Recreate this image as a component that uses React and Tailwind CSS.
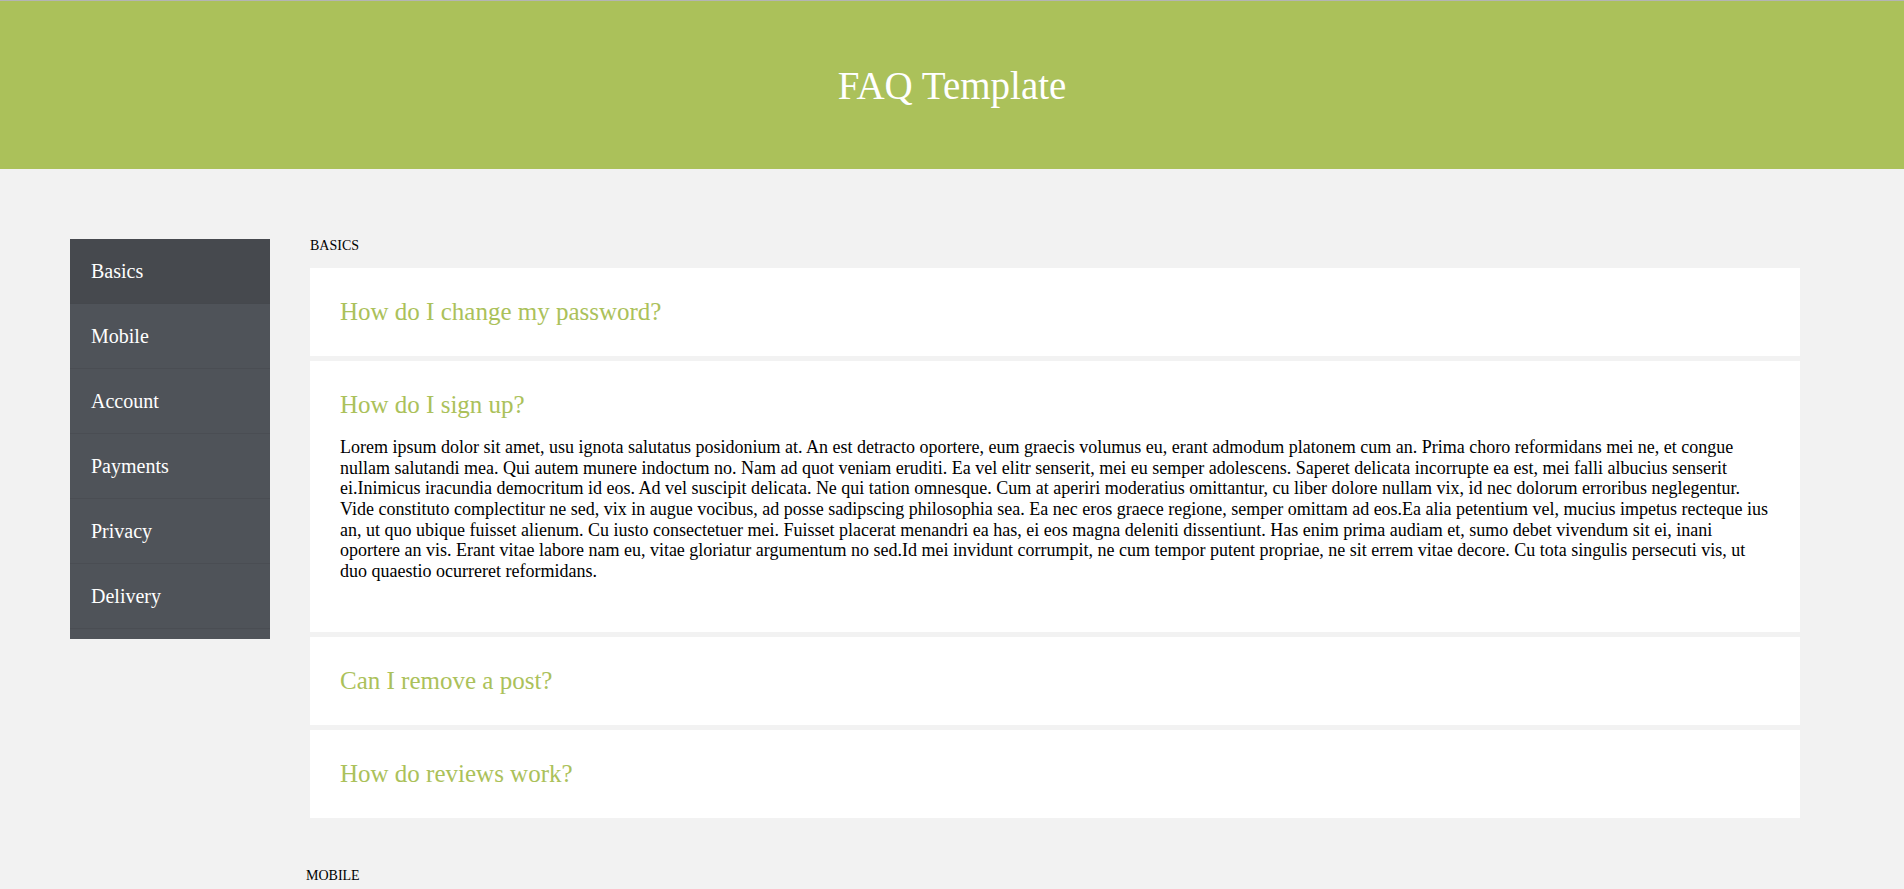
const categories = ["Basics", "Mobile", "Account", "Payments", "Privacy", "Delivery"];

const lorem =
  "Lorem ipsum dolor sit amet, usu ignota salutatus posidonium at. An est detracto oportere, eum graecis volumus eu, erant admodum platonem cum an. Prima choro reformidans mei ne, et congue nullam salutandi mea. Qui autem munere indoctum no. Nam ad quot veniam eruditi. Ea vel elitr senserit, mei eu semper adolescens. Saperet delicata incorrupte ea est, mei falli albucius senserit ei.Inimicus iracundia democritum id eos. Ad vel suscipit delicata. Ne qui tation omnesque. Cum at aperiri moderatius omittantur, cu liber dolore nullam vix, id nec dolorum erroribus neglegentur. Vide constituto complectitur ne sed, vix in augue vocibus, ad posse sadipscing philosophia sea. Ea nec eros graece regione, semper omittam ad eos.Ea alia petentium vel, mucius impetus recteque ius an, ut quo ubique fuisset alienum. Cu iusto consectetuer mei. Fuisset placerat menandri ea has, ei eos magna deleniti dissentiunt. Has enim prima audiam et, sumo debet vivendum sit ei, inani oportere an vis. Erant vitae labore nam eu, vitae gloriatur argumentum no sed.Id mei invidunt corrumpit, ne cum tempor putent propriae, ne sit errem vitae decore. Cu tota singulis persecuti vis, ut duo quaestio ocurreret reformidans.";

const sections = [
  {
    title: "BASICS",
    shift: "ml-0",
    items: [
      { q: "How do I change my password?" },
      { q: "How do I sign up?", open: true },
      { q: "Can I remove a post?" },
      { q: "How do reviews work?" },
    ],
  },
  {
    title: "MOBILE",
    shift: "-ml-[4px]",
    items: [
      { q: "How does syncing work?" },
      { q: "How do I upload files from my phone or tablet?" },
      { q: "How do I link to a file or folder?" },
    ],
  },
];

function FaqItem({ q, open }) {
  return (
    <li className="bg-white px-[30px] py-[30px]">
      <h3 className="text-[25px] leading-[28px] text-[#abc15a]">{q}</h3>
      {open && (
        <p className="mt-[18px] mb-[20px] text-[18px] leading-[1.15] text-black">{lorem}</p>
      )}
    </li>
  );
}

export default function App() {
  return (
    <div className="min-h-screen bg-[#f2f2f2] font-['Liberation_Serif','Times_New_Roman',serif]">
      <header className="flex h-[169px] items-center justify-center border-t border-[#b4b4b4] bg-[#abc15a]">
        <h1 className="text-[39px] leading-[45px] text-white">FAQ Template</h1>
      </header>

      <div className="flex items-start gap-[40px] pl-[70px] pt-[69px]">
        <ul className="mt-[1px] w-[200px] shrink-0 bg-[#4f5359] pb-[10px]">
          {categories.map((c, i) => (
            <li
              key={c}
              className={
                i === 0
                  ? "flex h-[65px] items-center border-b border-[#45484d] bg-[#46494e] pl-[21px] text-[20px] text-white"
                  : "flex h-[65px] items-center border-b border-[#4a4d53] pl-[21px] text-[20px] text-white"
              }
            >
              {c}
            </li>
          ))}
        </ul>

        <main className="w-[1490px]">
          {sections.map((s) => (
            <section key={s.title} className="mb-[50px]">
              <h2 className={`${s.shift} mb-[14px] text-[14px] leading-[16px] text-black`}>{s.title}</h2>
              <ul className="flex flex-col gap-[5px]">
                {s.items.map((it) => (
                  <FaqItem key={it.q} q={it.q} open={it.open} />
                ))}
              </ul>
            </section>
          ))}
        </main>
      </div>
    </div>
  );
}
